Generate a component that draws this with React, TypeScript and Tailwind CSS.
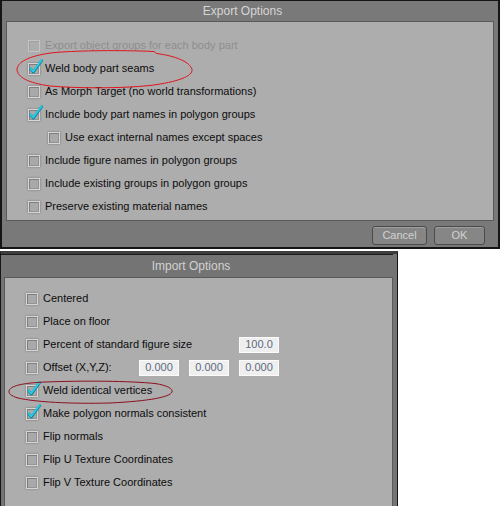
import clsx from 'clsx';

/**
 * Two stacked dialog screenshots (Export / Import options) with
 * hand-drawn red ellipses around the "weld" options.
 */

function Box({ checked, disabled }: { checked?: boolean; disabled?: boolean }) {
  return (
    <span
      className={clsx(
        'relative inline-block h-[12px] w-[12px] shrink-0 border',
        disabled
          ? 'border-[#c4c4c4] bg-[#adadad] shadow-[inset_1px_1px_0_#a0a0a0]'
          : 'border-[#d6d6d6] bg-[#a9a9a9] shadow-[inset_1px_1px_0_#7e7e7e,inset_-1px_-1px_0_#939393,0_0_2px_rgba(0,0,0,0.35)]',
      )}
    >
      {checked && (
        <svg viewBox="0 0 15 15" className="absolute left-[0px] top-[-5px] h-[15px] w-[15px] overflow-visible">
          <path d="M1.8 9.8 L4.3 13.2 L12.8 1.6" fill="none" stroke="#0b7f96" strokeWidth="2.6" strokeLinecap="round" strokeLinejoin="round" />
          <path d="M1.6 9.2 L4.1 12.5 L12.6 1.2" fill="none" stroke="#25cde8" strokeWidth="1.9" strokeLinecap="round" strokeLinejoin="round" />
        </svg>
      )}
    </span>
  );
}

function Row({
  label,
  checked,
  disabled,
  indent,
  labelWidth,
  children,
}: {
  label: string;
  checked?: boolean;
  disabled?: boolean;
  indent?: boolean;
  labelWidth?: string;
  children?: React.ReactNode;
}) {
  return (
    <div className={clsx('flex h-[23px] items-center', indent && 'pl-[20px]')}>
      <Box checked={checked} disabled={disabled} />
      <span
        className={clsx(
          'ml-[5px] whitespace-nowrap text-[11px]',
          disabled ? 'text-[#8e8e8e]' : 'text-[#0c0c0c]',
          labelWidth,
        )}
      >
        {label}
      </span>
      {children}
    </div>
  );
}

function Field({ value }: { value: string }) {
  return (
    <span className="flex h-[16px] w-[40px] shrink-0 items-center justify-center border border-[#fbfbfb] bg-[#efefef] text-[11px] text-[#5b6b80]">
      {value}
    </span>
  );
}

function Btn({ label, w }: { label: string; w: string }) {
  return (
    <button
      type="button"
      className={clsx(
        'flex h-[19px] items-center justify-center rounded-[3px] border border-[#4a4a4a] bg-[#868686] text-[11px] text-[#d2d2d2] shadow-[inset_0_1px_0_#a0a0a0]',
        w,
      )}
    >
      {label}
    </button>
  );
}

export default function App() {
  return (
    <div className="relative h-[506px] w-[500px] overflow-hidden bg-white font-['Liberation_Sans',Arial,sans-serif]">
      {/* Export dialog */}
      <div className="flex h-[249px] w-[500px] flex-col border-x-2 border-b-2 border-t border-[#151515] bg-[#797979]">
        <div className="flex h-[20px] items-center justify-center pr-[15px] text-[12px] text-[#d6d6d6]">
          Export Options
        </div>
        <div className="mx-[4px] h-[200px] border border-[#5a5a5a] bg-[#adadad] pl-[21px] pt-[12px]">
          <Row label="Export object groups for each body part" disabled />
          <Row label="Weld body part seams" checked />
          <Row label="As Morph Target (no world transformations)" />
          <Row label="Include body part names in polygon groups" checked />
          <Row label="Use exact internal names except spaces" indent />
          <Row label="Include figure names in polygon groups" />
          <Row label="Include existing groups in polygon groups" />
          <Row label="Preserve existing material names" />
        </div>
        <div className="flex flex-1 justify-end gap-[7px] pr-[13px] pt-[5px]">
          <Btn label="Cancel" w="w-[55px]" />
          <Btn label="OK" w="w-[51px]" />
        </div>
      </div>

      {/* Import dialog */}
      <div className="mt-[2px] flex h-[260px] w-[398px] flex-col border-x border-t-[3px] border-x-[#151515] border-t-[#3d3d3d] bg-[#747474] pr-[4px]">
        <div className="h-px bg-[#1a1a1a]" />
        <div className="flex h-[22px] items-center justify-center pr-[12px] text-[12px] text-[#d2d2d2]">
          Import Options
        </div>
        <div className="ml-[3px] flex-1 border border-[#5a5a5a] bg-[#adadad] pl-[21px] pt-[9px]">
          <Row label="Centered" />
          <Row label="Place on floor" />
          <Row label="Percent of standard figure size" labelWidth="w-[196px]">
            <Field value="100.0" />
          </Row>
          <Row label="Offset (X,Y,Z):" labelWidth="w-[96px]">
            <div className="flex gap-[10px]">
              <Field value="0.000" />
              <Field value="0.000" />
              <Field value="0.000" />
            </div>
          </Row>
          <Row label="Weld identical vertices" checked />
          <Row label="Make polygon normals consistent" checked />
          <Row label="Flip normals" />
          <Row label="Flip U Texture Coordinates" />
          <Row label="Flip V Texture Coordinates" />
        </div>
      </div>

      {/* hand-drawn annotations */}
      <svg className="pointer-events-none absolute left-0 top-0 h-[506px] w-[500px]" viewBox="0 0 500 506">
        <path
          d="M17 69 C18 61 32 55 55 52.5 C80 50.5 120 50 154 51.5 L156.5 53.5 C176 56 190 62 192 69.5 C193 76 178 82 150 85.5 C120 88.5 80 88.5 50 86 C28 83 17 77 17 69 Z"
          fill="none"
          stroke="#e0141c"
          strokeWidth="1"
        />
        <path
          d="M9 391 C10 386 22 383 45 382 C85 380.5 130 381 155 383.5 C168 385.5 173 389 172 392 C170 397 150 401 110 403 C70 404 35 402 18 398 C11 396 8.5 393.5 9 391 Z"
          fill="none"
          stroke="#8c1020"
          strokeWidth="1"
        />
      </svg>
    </div>
  );
}
